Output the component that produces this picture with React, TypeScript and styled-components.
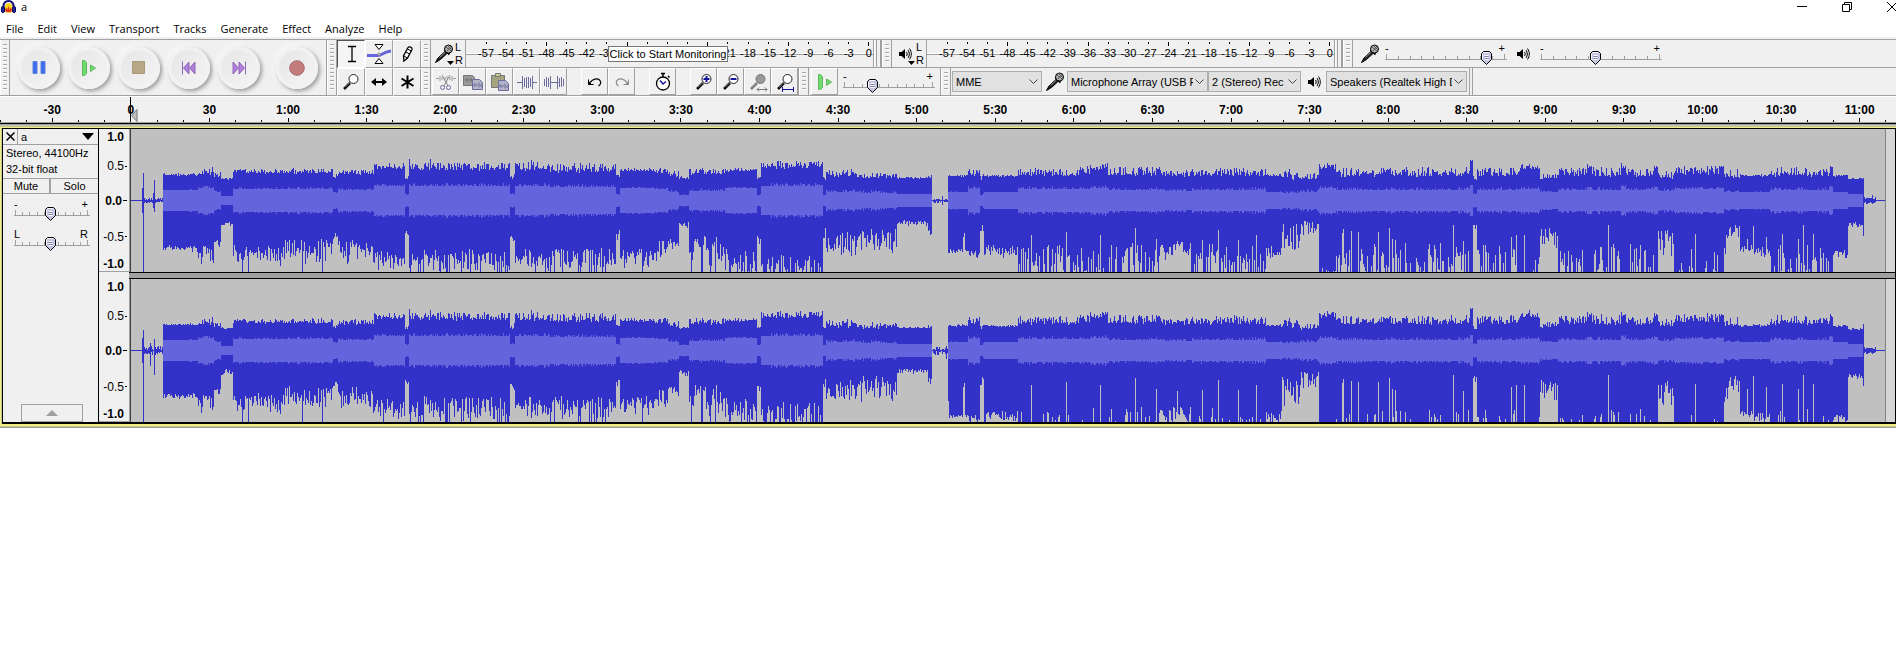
import React from "react";
import styled, { createGlobalStyle, css } from "styled-components";

const GlobalStyle = createGlobalStyle`
  * { box-sizing: border-box; }
  body { margin: 0; background: #fff; color: #000; font: 11px/14px "Liberation Sans", Arial, sans-serif; overflow-x: hidden; }
  button, select, input { font: inherit; color: inherit; margin: 0; padding: 0; border: 0; background: none; border-radius: 0; }
  svg { display: block; flex: none; }
`;

const FACE = "#f0f0f0";
const LINE = "#a0a0a0";

/* ---------- title and menu ---------- */

const TitleBar = styled.header`
  display: flex;
  align-items: center;
  height: 18px;
  padding: 0 0 4px 1px;
  overflow: hidden;
`;
const Title = styled.h1`
  flex: 1;
  margin: 0 0 0 5px;
  font: 11px/14px "Open Sans", sans-serif;
`;
const WindowButtons = styled.div`
  display: flex;
  margin-right: -18px;
`;
const WindowButton = styled.button`
  display: grid;
  place-items: center;
  width: 45px;
  height: 14px;
`;
const MenuBar = styled.nav`
  display: flex;
  gap: 14px;
  height: 19px;
  padding-left: 6px;
`;
const MenuItem = styled.button`
  font: 11px/22px "Open Sans", sans-serif;
  height: 19px;
`;

/* ---------- toolbars ---------- */

const Dock = styled.section`
  display: flex;
  height: 59px;
  padding-top: 2px;
  background: ${FACE};
`;
const DockRows = styled.div`
  display: flex;
  flex: 1;
  flex-direction: column;
  min-width: 0;
`;
const DockRow = styled.div`
  display: flex;
  height: 28px;
  border-top: 1px solid ${LINE};
  &:last-child { height: 29px; border-bottom: 1px solid ${LINE}; }
`;
const Bar = styled.div<{ $lead: number; $edge?: number }>`
  display: flex;
  align-items: center;
  flex: none;
  padding-left: ${(p) => p.$lead}px;
  border-right: ${(p) => p.$edge ?? 1}px solid ${LINE};
`;
const Grip = styled.div`
  flex: none;
  width: 10px;
  align-self: stretch;
  border-left: 1px solid #fff;
  border-right: 1px solid ${LINE};
  background: repeating-linear-gradient(#a6a6a6 0 1px, #fff 1px 2px, ${FACE} 2px 4px) 2px 4px / 4px calc(100% - 8px) no-repeat;
`;
const TransportBar = styled.div`
  display: flex;
  align-items: center;
  width: 327px;
  border: solid ${LINE};
  border-width: 1px 1px 1px 0;
`;
const TransportButtons = styled.div`
  display: flex;
  gap: 8px;
  padding-left: 8px;
`;
const RoundButton = styled.button<{ $apart?: boolean }>`
  display: grid;
  place-items: center;
  width: 42px;
  height: 42px;
  margin-left: ${(p) => (p.$apart ? 8 : 0)}px;
  border-radius: 50%;
  background: radial-gradient(circle at 50% 50%, transparent 56%, #f2f2f2 64%), linear-gradient(135deg, #e4e4e4, #f6f6f6);
  box-shadow: 2px 2px 4px #999, -2px -2px 4px #fafafa;
`;
const ToolsBar = styled.div`
  display: flex;
  width: 94px;
  border: solid ${LINE};
  border-width: 1px 0;
`;
const ToolGrid = styled.div`
  display: grid;
  flex: 1;
  grid-template: repeat(2, 28px) / repeat(3, 28px);
`;
const ToolButton = styled.button<{ $down?: boolean }>`
  display: grid;
  flex: none;
  place-items: center;
  width: 27px;
  height: 27px;
  border: 1px solid;
  border-color: #fff ${LINE} ${LINE} #fff;
  ${(p) => p.$down && css`
    border-color: #555 #fff #fff #555;
    background: #f5f5f5;
  `}
`;
const ToolCell = styled(ToolButton)`
  width: 28px;
  height: 28px;
`;
const Gap = styled.span`
  width: 14px;
`;

/* ---------- meters ---------- */

const MeterHead = styled.button`
  display: flex;
  align-items: center;
  gap: 1px;
  width: 34px;
  height: 27px;
  padding-left: 2px;
  text-align: left;
`;
const Channels = styled.span`
  width: 8px;
  line-height: 13px;
`;
const MeterScale = styled.div`
  position: relative;
  display: flex;
  width: 408px;
  height: 27px;
  padding-left: 10px;
  overflow: hidden;
  border-left: 1px solid ${LINE};
  background: linear-gradient(#fff 0 1px, ${LINE} 1px) 0 13px / 100% 2px no-repeat;
`;
const MeterMarks = styled.div`
  display: grid;
  flex: none;
  grid-template-columns: repeat(20, 1fr);
  width: 403px;
`;
const MeterMark = styled.span<{ $major: boolean }>`
  display: flex;
  flex-direction: column;
  align-items: center;
  padding-top: 2px;
  line-height: 12px;
  &::before {
    content: "";
    width: 1px;
    height: ${(p) => (p.$major ? 4 : 2)}px;
    margin-bottom: ${(p) => (p.$major ? 1 : 3)}px;
    background: #000;
  }
`;
const MeterStop = styled.span`
  width: 7px;
  height: 27px;
  background: linear-gradient(90deg, ${LINE} 1px, #fff 1px 2px, ${FACE} 2px 3px, ${LINE} 3px 4px, ${FACE} 4px);
`;
const BarEnd = styled.span`
  width: 3px;
  height: 27px;
  border-right: 1px solid ${LINE};
`;
const Tip = styled.div`
  position: absolute;
  z-index: 2;
  top: 46px;
  left: 608px;
  width: 120px;
  height: 16px;
  border: 1px solid #767676;
  background: #fff;
  line-height: 14px;
  text-align: center;
  white-space: nowrap;
`;

/* ---------- sliders and drop-downs ---------- */

const SliderBox = styled.label<{ $w: number }>`
  position: relative;
  display: block;
  flex: none;
  width: ${(p) => p.$w}px;
  height: 20px;
`;
const SliderEnds = styled.span`
  display: flex;
  justify-content: space-between;
  height: 8px;
  padding-right: 2px;
  line-height: 8px;
`;
const SliderTicks = styled.span`
  display: flex;
  justify-content: space-between;
  height: 8px;
  padding: 2px 2px 0 1px;
  border-bottom: 1px solid ${LINE};
`;
const SliderTick = styled.i<{ $end: boolean }>`
  width: 1px;
  height: ${(p) => (p.$end ? 5 : 3)}px;
  margin-top: ${(p) => (p.$end ? 0 : 2)}px;
  background: ${LINE};
`;
const thumb = encodeURIComponent(
  `<svg xmlns="http://www.w3.org/2000/svg" width="11" height="14"><path d="M2.5.5h6l2 2v6l-5 5-5-5v-6z" fill="#c6c6e2" stroke="#000"/><path d="M2.500 1.500h5M1.500 3v5" stroke="#fff"/><path d="M3.500 4.500h4M3.500 6.500h4M3.500 8.500h4" stroke="#fff"/><path d="M3.500 5.500h4M3.500 7.500h4" stroke="#8080a8"/></svg>`
);
const Range = styled.input`
  position: absolute;
  top: 7px;
  left: -4px;
  width: calc(100% + 8px);
  height: 14px;
  appearance: none;
  &::-webkit-slider-thumb {
    appearance: none;
    width: 11px;
    height: 14px;
    background: url("data:image/svg+xml,${thumb}") no-repeat;
  }
`;
const SelectBox = styled.div<{ $w: number }>`
  position: relative;
  flex: none;
  width: ${(p) => p.$w}px;
  height: 21px;
  svg { position: absolute; top: 8px; right: 4px; pointer-events: none; }
`;
const Select = styled.select`
  width: 100%;
  height: 21px;
  padding: 0 14px 0 3px;
  appearance: none;
  overflow: hidden;
  border: 1px solid #adadad;
  background: #e1e1e1;
`;
const IconSlot = styled.span<{ $w: number }>`
  display: grid;
  flex: none;
  place-items: center;
  width: ${(p) => p.$w}px;
`;
const MixerBar = styled.div`
  display: flex;
  align-items: center;
  padding-left: 3px;
`;

/* ---------- timeline ---------- */

const Timeline = styled.div`
  position: relative;
  display: flex;
  height: 27px;
  overflow: hidden;
  border-top: 1px solid #fff;
  border-bottom: 1px solid ${LINE};
  background: ${FACE};
`;
const TimeLead = styled.span`
  flex: none;
  align-self: flex-end;
  width: 13px;
  height: 2px;
  border-left: 1px solid #000;
`;
const TimeMarks = styled.div`
  display: grid;
  flex: 1;
  grid-template-columns: repeat(24, 1fr);
  margin-right: -3px;
`;
const TimeMark = styled.div`
  display: grid;
  grid-template: 20px 1fr / repeat(3, 1fr);
  padding-top: 1px;
  b { grid-column: 1 / 4; text-align: center; font-size: 12px; line-height: 24px; }
`;
const TimeTick = styled.i<{ $major?: boolean }>`
  align-self: end;
  justify-self: center;
  width: 1px;
  height: ${(p) => (p.$major ? 4 : 2)}px;
  background: #000;
`;
const Playhead = styled.svg`
  position: absolute;
  top: 0;
  left: 130px;
`;

/* ---------- track ---------- */

const TrackFrame = styled.section`
  border-top: 1px solid #000;
  box-shadow: inset 0 1px ${LINE}, inset 0 -1px #9c9c88;
  padding: 3px 0 2px;
  background: #c6c6a4;
`;
const TrackGlow = styled.div`
  padding-left: 1px;
  border: solid #f2ee80;
  border-width: 1px 0 2px 1px;
`;
const Track = styled.div`
  display: flex;
  border: solid #000;
  border-width: 1px 1px 2px;
`;
const Panel = styled.aside`
  display: flex;
  flex: none;
  flex-direction: column;
  width: 96px;
  border-right: 1px solid #000;
  background: ${FACE};
`;
const PanelHead = styled.div`
  display: flex;
  height: 16px;
  border-bottom: 1px solid ${LINE};
`;
const CloseButton = styled.button`
  display: grid;
  place-items: center;
  width: 15px;
  border-right: 1px solid ${LINE};
`;
const NameButton = styled.button`
  display: flex;
  flex: 1;
  align-items: center;
  justify-content: space-between;
  padding: 0 4px 0 3px;
`;
const Format = styled.p`
  margin: 0;
  padding: 0 0 1px 3px;
  line-height: 16px;
  border-bottom: 1px solid ${LINE};
`;
const Toggles = styled.div`
  display: flex;
  height: 15px;
  border-bottom: 1px solid ${LINE};
`;
const Toggle = styled.button`
  width: 46px;
  line-height: 13px;
  & + & { flex: 1; border-left: 2px solid ${LINE}; }
`;
const PanelSliders = styled.div`
  display: grid;
  gap: 10px;
  padding: 6px 0 0 11px;
`;
const CollapseButton = styled.button`
  display: grid;
  place-items: center;
  width: 62px;
  height: 18px;
  margin: auto 0 0 18px;
  border: 1px solid ${LINE};
`;
const Lanes = styled.div`
  display: flex;
  flex: 1;
  flex-direction: column;
  min-width: 0;
  background: ${FACE};
`;
const Lane = styled.div`
  display: flex;
  height: 143px;
`;
const Divider = styled.div`
  height: 7px;
  margin-left: 30px;
  border: solid #000;
  border-width: 1px 0;
  background: ${LINE};
`;
const Levels = styled.div`
  display: grid;
  flex: none;
  grid-template-rows: 16px 42px 27px 45px 9px;
  align-items: center;
  width: 31px;
  padding-right: 2px;
  border: solid ${LINE};
  border-width: 0 1px 1px 0;
  font-size: 12px;
`;
const Level = styled.span<{ $main: boolean; $tick: boolean }>`
  display: flex;
  align-items: center;
  justify-content: flex-end;
  gap: 1px;
  font-weight: ${(p) => (p.$main ? "bold" : "normal")};
  line-height: 12px;
  &::after {
    content: "";
    width: ${(p) => (p.$main && p.$tick ? 4 : 2)}px;
    height: 1px;
    background: ${(p) => (p.$tick ? "#000" : "none")};
  }
`;
const Clip = styled.div`
  flex: 1;
  min-width: 0;
  border-left: 1px solid #404040;
  border-right: 1px solid #808080;
  background: #c0c0c0;
  svg { width: 100%; height: 143px; }
`;
const AfterClip = styled.div`
  flex: none;
  width: 9px;
  background: #d6d6d6;
`;

/* ---------- wave data ---------- */

// from, to, top low, top high, rms, bottom low, bottom high, share of columns that reach full scale
type Part = [number, number, number, number, number, number, number, number];

const PARTS: Part[] = [
  [163, 198, 24, 26, 10, 44, 52, 0],
  [198, 214, 25, 32, 12, 43, 68, 0],
  [214, 221, 23, 27, 8, 38, 48, 0],
  [221, 233, 20, 22, 4, 20, 28, 0],
  [233, 285, 26, 30, 11, 43, 66, 0.03],
  [285, 333, 26, 31, 11, 36, 64, 0.03],
  [333, 338, 21, 25, 7, 31, 42, 0],
  [338, 374, 25, 30, 10, 38, 67, 0],
  [374, 405, 30, 36, 14, 48, 78, 0.08],
  [405, 409, 20, 24, 5, 28, 45, 0],
  [409, 510, 29, 37, 14, 46, 78, 0.14],
  [510, 515, 21, 26, 6, 34, 46, 0],
  [515, 550, 29, 37, 14, 46, 72, 0.04],
  [550, 616, 27, 36, 13, 46, 78, 0.14],
  [616, 620, 22, 25, 5, 28, 46, 0],
  [620, 655, 28, 31, 12, 46, 72, 0.08],
  [655, 668, 26, 31, 11, 34, 66, 0.03],
  [668, 679, 23, 28, 8, 34, 54, 0],
  [679, 689, 21, 23, 5, 20, 28, 0],
  [689, 725, 25, 31, 9, 32, 70, 0.06],
  [725, 757, 28, 31, 12, 48, 76, 0.08],
  [757, 761, 21, 24, 5, 35, 46, 0],
  [761, 823, 31, 38, 14, 52, 84, 0.35],
  [823, 826, 20, 22, 5, 27, 42, 0],
  [826, 862, 22, 30, 8, 30, 58, 0.03],
  [862, 897, 21, 27, 7, 26, 58, 0.04],
  [897, 928, 21, 22, 6, 19, 25, 0],
  [928, 932, 22, 25, 6, 28, 44, 0],
  [948, 968, 23, 25, 8, 48, 53, 0],
  [968, 980, 23, 31, 11, 48, 58, 0],
  [980, 984, 19, 25, 5, 22, 36, 0],
  [984, 1018, 23, 24, 8, 44, 58, 0],
  [1018, 1080, 23, 31, 11, 42, 78, 0.4],
  [1080, 1090, 25, 33, 11, 42, 80, 0.5],
  [1090, 1108, 29, 36, 12, 42, 84, 0.6],
  [1108, 1160, 24, 33, 10, 40, 78, 0.4],
  [1160, 1192, 23, 29, 9, 40, 62, 0.03],
  [1192, 1266, 23, 32, 10, 42, 80, 0.42],
  [1266, 1282, 23, 25, 8, 44, 60, 0],
  [1282, 1300, 20, 30, 7, 22, 60, 0],
  [1300, 1319, 20, 26, 8, 18, 40, 0],
  [1319, 1336, 30, 35, 12, 66, 84, 0.8],
  [1336, 1470, 23, 32, 10, 42, 80, 0.42],
  [1470, 1473, 39, 39, 15, 80, 80, 1],
  [1473, 1477, 20, 24, 6, 23, 30, 0],
  [1477, 1520, 23, 32, 10, 42, 80, 0.42],
  [1520, 1540, 30, 35, 11, 50, 84, 0.7],
  [1540, 1558, 20, 28, 8, 26, 50, 0],
  [1558, 1587, 23, 32, 10, 42, 80, 0.4],
  [1587, 1592, 31, 35, 13, 60, 84, 0.6],
  [1592, 1621, 23, 33, 10, 42, 80, 0.4],
  [1621, 1626, 31, 36, 13, 70, 84, 0.8],
  [1626, 1654, 23, 31, 10, 42, 80, 0.42],
  [1654, 1658, 31, 35, 13, 40, 84, 0.6],
  [1658, 1674, 21, 28, 9, 24, 62, 0],
  [1674, 1719, 25, 34, 11, 44, 82, 0.5],
  [1719, 1724, 31, 35, 12, 70, 84, 0.8],
  [1724, 1740, 21, 30, 8, 20, 60, 0],
  [1740, 1754, 23, 25, 8, 44, 52, 0],
  [1754, 1770, 23, 25, 8, 46, 58, 0],
  [1770, 1830, 23, 32, 10, 42, 80, 0.42],
  [1830, 1833, 31, 34, 13, 76, 84, 1],
  [1833, 1848, 23, 24, 8, 48, 58, 0],
  [1848, 1863, 20, 21, 6, 20, 29, 0],
];

const ORIGIN = 131;
const SPAN = 1754;

function noise(i: number, seed: number) {
  let h = (i * 374761393 + seed * 668265263) | 0;
  h = Math.imul(h ^ (h >>> 13), 1274126177);
  return ((h ^ (h >>> 16)) >>> 0) / 4294967296;
}

function buildWave(channel: number) {
  let peak = "";
  let rms = "";
  const column = (x: number, up: number, down: number) => {
    const top = 71 - Math.min(71, Math.round(up));
    const bottom = 72 + Math.min(71, Math.round(down));
    peak += `M${x - ORIGIN + 0.5} ${top}V${bottom}`;
  };
  for (let x = ORIGIN; x < ORIGIN + SPAN; x++) column(x, 0, 0);
  for (let x = 144; x < 163; x++) column(x, noise(x, 5) * 2 * channel, noise(x, 6) * 2 * channel);
  for (let x = 933; x < 948; x++) column(x, noise(x, 7) * channel * 1.5, noise(x, 8) * 2 * channel);
  for (let x = 1864; x < 1876; x++) column(x, 1 + noise(x, 9) * 2, 1 + noise(x, 10) * 2);
  column(142, 12, 12);
  column(143, channel === 1 ? 27 : 20, 72);
  column(channel === 1 ? 153 : 150, 7, channel === 1 ? 7 : 15);
  column(154, channel === 1 ? 20 : 11, channel === 1 ? 11 : 24);
  column(channel === 1 ? 942 : 946, 4, channel === 1 ? 4 : 8);
  column(1872, channel === 1 ? 5 : 2, 3);
  column(1863, channel === 1 ? 22 : 26, 35);
  for (const [from, to, tl, th, r, bl, bh, full] of PARTS) {
    for (let x = from; x < to; x++) {
      const shared = noise(x, 1);
      const own = noise(x, 20 + channel);
      const late = x > 948;
      const lift = channel === 2 && late && th > 26 ? 2 : 0;
      let up = tl + (th - tl) * shared ** 1.3 + own * 1.5 + lift;
      if (th > 34 && noise(x, 13) < 0.05) up += 3;
      const extra = channel === 1 ? 0 : late ? (bl > 38 ? 15 : 2) : -2;
      let down = bl + extra + (bh - bl) * (noise(x, 2) * 0.7 + own * 0.3) ** 1.3;
      if (noise(x, 3) < full * (channel === 2 && late ? 1.4 : 1)) down = 72;
      if (late && bl > 38 && noise(x, 4) < 0.06) down = 24 + noise(x, 11) * 16;
      column(x, up, down);
      const body = Math.round(r + noise(x, 12) ** 2 * Math.min(3, (th - tl) / 2) - 0.3);
      rms += `M${x - ORIGIN + 0.5} ${71 - body}V${72 + body}`;
    }
  }
  return { peak, rms };
}

const WAVES = [buildWave(1), buildWave(2)];

function Wave({ data }: { data: { peak: string; rms: string } }) {
  return (
    <svg viewBox={`0 0 ${SPAN} 143`} preserveAspectRatio="none" shapeRendering="crispEdges" aria-hidden="true">
      <path d={data.peak} stroke="#3232c8" />
      <path d={data.rms} stroke="#6464dc" />
    </svg>
  );
}

/* ---------- icons ---------- */

type IconProps = { w?: number; h?: number; children: React.ReactNode };
const Icon = ({ w = 20, h = 20, children }: IconProps) => (
  <svg width={w} height={h} viewBox={`0 0 ${w} ${h}`} fill="none" stroke="#000" aria-hidden="true">
    {children}
  </svg>
);

const Logo = () => (
  <Icon w={15} h={14}>
    <path d="M2.500 9V6.500C2.500 3 4.500 1 7.500 1s5 2 5 5.500V9" stroke="#10107a" strokeWidth="2" />
    <path d="M3.500 8c0-3 1.500-5 4-5s4 2 4 5v3c-1 1.300-2 2-4 2s-3-.7-4-2z" fill="#ffd21c" stroke="none" />
    <path d="M4 9.500l1.500-2 .8 2.500 1.200-4 1.200 4 .8-2.500 1.500 2-1 2.500H5z" fill="#e8341c" stroke="none" />
    <rect x="0.500" y="6.500" width="3" height="6" rx="1.500" fill="#2a2a9a" stroke="#000060" />
    <rect x="11.500" y="6.500" width="3" height="6" rx="1.500" fill="#2a2a9a" stroke="#000060" />
  </Icon>
);
const MicIcon = () => (
  <Icon>
    <path d="M1.500 18.500L4 14l7-6.500 2 2-6.500 6z" fill="#222" />
    <path d="M5.500 13.500l5.500-5" stroke="#999" />
    <path d="M10.500 5.500l5 5" strokeWidth="2" />
    <circle cx="14.500" cy="5" r="4" fill="#b4b4b4" />
    <path d="M12 3l5 4M13.500 1.500l4 4M13 7l4-5" stroke="#555" />
  </Icon>
);
const SpeakerIcon = () => (
  <Icon w={16} h={14}>
    <path d="M2 5h2.500L8 2v10L4.500 9H2z" fill="#000" stroke="none" />
    <path d="M9.500 5c.9 1.200.9 2.800 0 4M11 3c1.800 2.500 1.800 5.500 0 8M12.500 1.500c2.400 3.500 2.400 7.500 0 11" />
  </Icon>
);
const Caret = () => (
  <Icon w={7} h={4}><path d="M0 0h7L3.500 4z" fill="#000" stroke="none" /></Icon>
);
const HeadIcon = styled.span`
  position: relative;
  display: grid;
  flex: none;
  place-items: center;
  width: 21px;
  height: 22px;
  svg:last-child { position: absolute; right: 0; bottom: 0; }
`;
const CaretWide = () => (
  <Icon w={12} h={7}><path d="M0 0h12L6 7z" fill="#000" stroke="none" /></Icon>
);
const Chevron = () => (
  <Icon w={9} h={6}><path d="M.5.5l4 4 4-4" stroke="#444" /></Icon>
);
const Lens = ({ fill = "#fff", dim = false, children }: { fill?: string; dim?: boolean; children?: React.ReactNode }) => (
  <Icon>
    <path d="M3 17l6-6" stroke={dim ? "#777" : "#000"} strokeWidth="2.500" />
    <path d="M4 15.500l4.500-4.500" stroke="#aaa" strokeWidth=".8" />
    <circle cx="12.500" cy="7" r="4.500" fill={fill} stroke={dim ? "#777" : "#222"} />
    {children}
  </Icon>
);
const UndoIcon = ({ flip = false }: { flip?: boolean }) => (
  <Icon>
    <g transform={flip ? "matrix(-1 0 0 1 20 0)" : undefined} stroke={flip ? "#8a8a8a" : "#000"}>
      <path d="M5 10.500C8 7 12 6 14.500 8c2 2 1.500 4.500-1 6" strokeWidth="1.200" />
      <path d="M3.500 7.500v5h5" />
      <path d="M3.500 12.500V9.500l3 3z" fill={flip ? "#8a8a8a" : "#000"} />
    </g>
  </Icon>
);

const playShape = <path d="M1.500.5h2l2 2v11l-2 2h-2zM9.500 5l5 3-5 3.500z" fill="#6edc6e" stroke="#5cb85c" />;

const transport: [string, React.ReactNode, boolean?][] = [
  ["Pause", <Icon key="i" w={14} h={13}><path d="M1 .5h4v12H1zM9 .5h4v12H9z" fill="#3c6cf0" stroke="#5a80dd" /></Icon>],
  ["Play", <Icon key="i" w={16} h={16}>{playShape}</Icon>],
  ["Stop", <Icon key="i" w={14} h={14}><path d="M.5.5h12v12H.5z" fill="#b9a887" stroke="#a89a78" /></Icon>],
  ["Skip to Start", <Icon key="i" w={14} h={14}><path d="M.5.5v13M7 1v12L1.500 7zM13 1v12L7.500 7z" fill="#b07fdc" stroke="#9068b8" /></Icon>],
  ["Skip to End", <Icon key="i" w={14} h={14}><path d="M13.500.5v13M7 1v12l5.500-6zM1 1v12l5.500-6z" fill="#b07fdc" stroke="#9068b8" /></Icon>],
  ["Record", <Icon key="i" w={16} h={16}><circle cx="8" cy="8" r="7.300" fill="#c27c7c" stroke="#a86a6a" /></Icon>, true],
];

const tools: [string, React.ReactNode][] = [
  ["Selection Tool", <Icon key="i"><path d="M7 2.500h8M11 3v14M7 17.500h8" strokeWidth="1.300" /></Icon>],
  ["Envelope Tool", <Icon key="i" w={26} h={22}><path d="M1 12.500h11c4 0 6-4 13-4.500" stroke="#6464dc" strokeWidth="3" /><path d="M9 1.500h8l-4 5zM9 20.500h8l-4-5z" fill="#fff" /><circle cx="13" cy="11" r="1.200" fill="#fff" stroke="#888" /></Icon>],
  ["Draw Tool", <Icon key="i"><path d="M7 17l-.5-5 4.500-8.500c1-1.500 4.500 0 4 2L10.500 14z" fill="#fff" strokeWidth="1.300" /><path d="M10.500 5l4 2M9 8l3.500 2M7 12l3 2M7.500 16l-1 1.500" /></Icon>],
  ["Zoom Tool", <Lens key="i" />],
  ["Time Shift Tool", <Icon key="i"><path d="M4 10h12" strokeWidth="2" /><path d="M2 10l5-4v8zM18 10l-5-4v8z" fill="#000" stroke="none" /></Icon>],
  ["Multi-Tool", <Icon key="i"><path d="M10.500 3.500v13M4.500 6.500l12 7.500M16.500 6.500L4.500 14" strokeWidth="2" /></Icon>],
];

const clipWave = "M3 11h2M5 9v4M7 10v2M9 8.500v5M11 10v3";
const SLATE = "#6c6c9c";

const edits: [string, React.ReactNode][] = [
  ["Cut", <Icon key="i"><path d="M0 6.500h3M4 4v5M6 5v3M14 5v3M16 4v5M17 6.500h3M9 5v3M11 4v3" stroke="#999" /><path d="M6 3l6 11M14 3L8 14" stroke="#888" /><circle cx="6.500" cy="15.500" r="2" stroke={SLATE} /><circle cx="12.500" cy="15.500" r="2" stroke={SLATE} /></Icon>],
  ["Copy", <Icon key="i"><path d="M.5 3.500h9l2 2v8H.5z" fill="#9a9a9a" stroke="#777" /><path d="M9.500 7.500h7l3 3v7h-10z" fill="#b4b4c8" stroke={SLATE} /><g transform="translate(7 2)"><path d={clipWave} stroke={SLATE} /></g><path d="M2 8h1M4 6v4M6 7v2M8 6v4" stroke="#666" /></Icon>],
  ["Paste", <Icon key="i"><path d="M1.500 3.500h13v12h-13z" fill="#a4a480" stroke="#777" /><path d="M5.500 1.500h5v3h-5z" fill="#c8c890" stroke="#777" /><path d="M8.500 8.500h7l3 3v7h-10z" fill="#b4b4c8" stroke={SLATE} /><g transform="translate(6 3)"><path d={clipWave} stroke={SLATE} /></g></Icon>],
  ["Trim", <Icon key="i"><path d="M0 10.500h5M15 10.500h5M5.500 4v13M15.500 4v13M7.500 6v9M9.500 5v11M11.500 5v11M13.500 6v9" stroke={SLATE} /></Icon>],
  ["Silence", <Icon key="i"><path d="M6.500 10.500h8M6.500 4v13M13.500 4v13M.5 7v7M2.500 5v10M4.500 6v9M15.500 6v9M17.500 5v10M19.500 7v7" stroke={SLATE} /></Icon>],
];
const zooms: [string, React.ReactNode][] = [
  ["Zoom In", <Lens key="i"><path d="M12.500 4v6M9.500 7h6" stroke="#1414a0" strokeWidth="2" /></Lens>],
  ["Zoom Out", <Lens key="i"><path d="M9.500 7h6" stroke="#1414a0" strokeWidth="2" /></Lens>],
  ["Fit Selection", <Lens key="i" fill="#999" dim><path d="M9 17.500h10M11 15.500l-2 2 2 2M17 15.500l2 2-2 2" stroke="#777" /></Lens>],
  ["Fit Project", <Lens key="i"><path d="M7.500 15v5M18.500 15v5M8 17.500h10" stroke="#1414a0" /></Lens>],
];

/* ---------- parts ---------- */

type SliderProps = { label: string; w: number; value: number; ends?: [string, string] };
const Slider = ({ label, w, value, ends = ["-", "+"] }: SliderProps) => (
  <SliderBox $w={w}>
    <SliderEnds aria-hidden="true"><span>{ends[0]}</span><span>{ends[1]}</span></SliderEnds>
    <SliderTicks>
      {Array.from({ length: 11 }, (_, i) => <SliderTick key={i} $end={i === 0 || i === 10} />)}
    </SliderTicks>
    <Range type="range" min={0} max={100} defaultValue={value} aria-label={label} />
  </SliderBox>
);

const DropDown = ({ label, w, value }: { label: string; w: number; value: string }) => (
  <SelectBox $w={w}>
    <Select aria-label={label}><option>{value}</option></Select>
    <Chevron />
  </SelectBox>
);

const Meter = ({ label, icon }: { label: string; icon: React.ReactNode }) => (
  <Bar $lead={0} $edge={2}>
    <MeterHead aria-label={label}>
      <HeadIcon>{icon}<Caret /></HeadIcon>
      <Channels>L<br />R</Channels>
    </MeterHead>
    <MeterScale>
      <MeterMarks>
        {Array.from({ length: 20 }, (_, i) => {
          const db = -57 + i * 3;
          return <MeterMark key={db} $major={db % 12 === 0}>{db}</MeterMark>;
        })}
      </MeterMarks>
    </MeterScale>
    <MeterStop />
  </Bar>
);

const timeLabel = (s: number) =>
  s < 60 ? String(s) : `${Math.floor(s / 60)}:${String(s % 60).padStart(2, "0")}`;

const Channel = ({ data }: { data: { peak: string; rms: string } }) => (
  <Lane>
    <Levels>
      {["1.0", "0.5", "0.0", "-0.5", "-1.0"].map((v, i) => (
        <Level key={v} $main={i % 2 === 0} $tick={i > 0 && i < 4}>{v}</Level>
      ))}
    </Levels>
    <Clip><Wave data={data} /></Clip>
    <AfterClip />
  </Lane>
);

export default function App() {
  return (
    <>
      <GlobalStyle />
      <TitleBar>
        <Logo />
        <Title>a</Title>
        <WindowButtons>
          <WindowButton aria-label="Minimize"><Icon w={10} h={10}><path d="M0 4.500h10" /></Icon></WindowButton>
          <WindowButton aria-label="Restore"><Icon w={10} h={10}><path d="M.5 2.500h7v7h-7zM2.500 2V.5h7v7H8" /></Icon></WindowButton>
          <WindowButton aria-label="Close"><Icon w={10} h={10}><path d="M0 0l10 10M10 0L0 10" /></Icon></WindowButton>
        </WindowButtons>
      </TitleBar>
      <MenuBar>
        {["File", "Edit", "View", "Transport", "Tracks", "Generate", "Effect", "Analyze", "Help"].map((m) => (
          <MenuItem key={m}>{m}</MenuItem>
        ))}
      </MenuBar>

      <Dock>
        <TransportBar>
          <Grip />
          <TransportButtons>
            {transport.map(([label, icon, apart]) => (
              <RoundButton key={label} aria-label={label} $apart={apart}>{icon}</RoundButton>
            ))}
          </TransportButtons>
        </TransportBar>
        <ToolsBar>
          <Grip />
          <ToolGrid>
            {tools.map(([label, icon], i) => (
              <ToolCell key={label} aria-label={label} $down={i === 0}>{icon}</ToolCell>
            ))}
          </ToolGrid>
        </ToolsBar>
        <DockRows>
          <DockRow>
            <Grip />
            <Meter label="Recording meter" icon={<MicIcon />} />
            <Grip />
            <Meter label="Playback meter" icon={<SpeakerIcon />} />
            <Grip />
            <MixerBar>
              <IconSlot $w={27}><MicIcon /></IconSlot>
              <IconSlot $w={2} />
              <Slider label="Recording volume" w={122} value={84} />
              <IconSlot $w={31}><SpeakerIcon /></IconSlot>
              <IconSlot $w={2} />
              <Slider label="Playback volume" w={122} value={45} />
            </MixerBar>
          </DockRow>
          <DockRow>
            <Grip />
            <Bar $lead={1}>
              {edits.map(([label, icon]) => <ToolButton key={label} aria-label={label}>{icon}</ToolButton>)}
              <Gap />
              <ToolButton aria-label="Undo"><UndoIcon /></ToolButton>
              <ToolButton aria-label="Redo"><UndoIcon flip /></ToolButton>
              <Gap />
              <ToolButton aria-label="Sync-Lock">
                <Icon>
                  <circle cx="10" cy="11.500" r="6.500" fill="#fff" strokeWidth="1.300" />
                  <path d="M8 1.500h4M10 2v3M15 4l1.500 1.500" strokeWidth="1.500" />
                  <path d="M7 8.500l3 3.500 3-2.500" stroke="#1414a0" strokeWidth="1.500" />
                </Icon>
              </ToolButton>
              <Gap />
              {zooms.map(([label, icon]) => <ToolButton key={label} aria-label={label}>{icon}</ToolButton>)}
            </Bar>
            <Grip />
            <Bar $lead={2}>
              <ToolButton aria-label="Play-at-Speed"><Icon w={16} h={16}>{playShape}</Icon></ToolButton>
              <IconSlot $w={5} />
              <Slider label="Playback speed" w={92} value={32} />
              <IconSlot $w={5} />
            </Bar>
            <Grip />
            <Bar $lead={1}>
              <DropDown label="Audio host" w={90} value="MME" />
              <IconSlot $w={25}><MicIcon /></IconSlot>
              <DropDown label="Recording device" w={141} value="Microphone Array (USB P" />
              <DropDown label="Recording channels" w={93} value="2 (Stereo) Rec" />
              <IconSlot $w={25}><SpeakerIcon /></IconSlot>
              <DropDown label="Playback device" w={141} value="Speakers (Realtek High D" />
              <IconSlot $w={2} />
            </Bar>
            <BarEnd />
          </DockRow>
        </DockRows>
      </Dock>
      <Tip role="tooltip">Click to Start Monitoring</Tip>

      <Timeline>
        <TimeLead />
        <TimeMarks>
          {Array.from({ length: 24 }, (_, i) => (
            <TimeMark key={i}>
              <b>{timeLabel((i - 1) * 30)}</b>
              <TimeTick /><TimeTick $major /><TimeTick />
            </TimeMark>
          ))}
        </TimeMarks>
        <Playhead width="8" height="25" aria-hidden="true">
          <path d="M.5 0v25" stroke="#000" />
          <path d="M7 12.500v12L1.500 18.500z" fill="#c0c0c0" stroke="#777" />
        </Playhead>
      </Timeline>

      <TrackFrame>
        <TrackGlow>
          <Track>
            <Panel>
              <PanelHead>
                <CloseButton aria-label="Close track"><Icon w={9} h={9}><path d="M.5.5l8 8M8.500.5l-8 8" strokeWidth="1.500" /></Icon></CloseButton>
                <NameButton>a<CaretWide /></NameButton>
              </PanelHead>
              <Format>Stereo, 44100Hz<br />32-bit float</Format>
              <Toggles><Toggle>Mute</Toggle><Toggle>Solo</Toggle></Toggles>
              <PanelSliders>
                <Slider label="Gain" w={76} value={48} />
                <Slider label="Pan" w={76} value={48} ends={["L", "R"]} />
              </PanelSliders>
              <CollapseButton aria-label="Collapse track">
                <Icon w={12} h={6}><path d="M0 6h12L6 0z" fill={LINE} stroke="none" /></Icon>
              </CollapseButton>
            </Panel>
            <Lanes>
              <Channel data={WAVES[0]} />
              <Divider />
              <Channel data={WAVES[1]} />
            </Lanes>
          </Track>
        </TrackGlow>
      </TrackFrame>
    </>
  );
}
